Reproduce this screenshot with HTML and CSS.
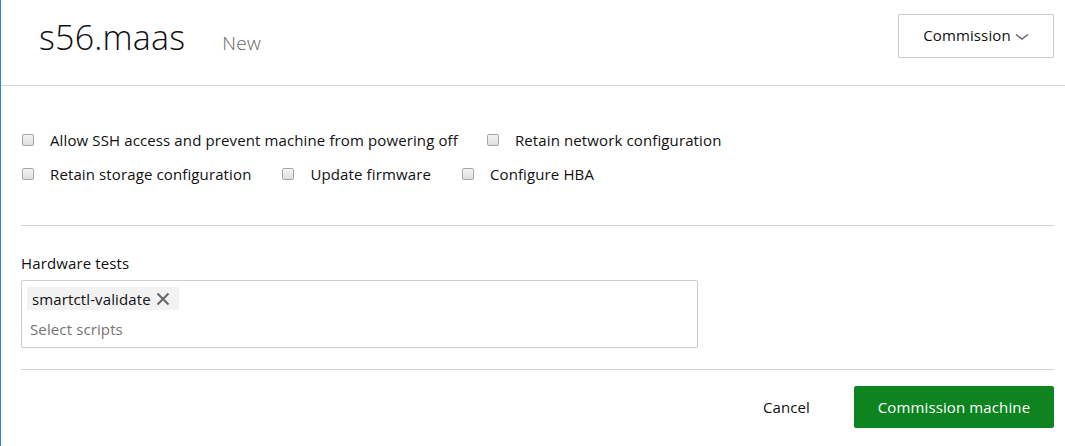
FILE: index.html
```html
<!DOCTYPE html>
<html>
<head>
<meta charset="utf-8">
<link rel="stylesheet" href="styles.css">
</head>
<body>
<div class="page">
  <header class="header">
    <div class="title-group">
      <h1 class="title">s56.maas</h1>
      <span class="status">New</span>
    </div>
    <button class="dropdown-btn">Commission
      <svg class="chev" width="14" height="8" viewBox="0 0 14 8"><path d="M1 1.5 L7 6 L13 1.5" fill="none" stroke="#666" stroke-width="1.4"/></svg>
    </button>
  </header>
  <main class="content">
    <div class="options">
      <div class="opt-row">
        <label class="check"><span class="box"></span>Allow SSH access and prevent machine from powering off</label>
        <label class="check"><span class="box"></span>Retain network configuration</label>
      </div>
      <div class="opt-row">
        <label class="check"><span class="box"></span>Retain storage configuration</label>
        <label class="check"><span class="box"></span>Update firmware</label>
        <label class="check"><span class="box"></span>Configure HBA</label>
      </div>
    </div>
    <hr class="rule">
    <div class="field">
      <div class="field-label">Hardware tests</div>
      <div class="tag-input">
        <span class="chip">smartctl-validate
          <svg class="chip-x" width="14" height="14" viewBox="0 0 14 14"><path d="M1.5 1.5 L12.5 12.5 M12.5 1.5 L1.5 12.5" stroke="#666" stroke-width="2"/></svg>
        </span>
        <div class="placeholder">Select scripts</div>
      </div>
    </div>
    <hr class="rule rule-bottom">
    <div class="actions">
      <button class="btn-link">Cancel</button>
      <button class="btn-primary">Commission machine</button>
    </div>
  </main>
</div>
</body>
</html>
```
FILE: styles.css
```css
* { box-sizing: border-box; }
html, body { margin: 0; padding: 0; background: #fff; }
body {
  font-family: "Open Sans", "Noto Sans", sans-serif;
  color: #111;
  letter-spacing: 0.12px;
}
.page {
  width: 1065px;
  height: 446px;
  border-left: 1px solid #1b8ee0;
  overflow: hidden;
}
.header {
  height: 86px;
  border-bottom: 1px solid #d2d2d2;
  display: flex;
  justify-content: space-between;
  align-items: flex-start;
  padding: 0 11px 0 38px;
}
.title-group {
  display: flex;
  align-items: baseline;
  padding-top: 15px;
}
.title {
  margin: 0;
  font-weight: 300;
  font-size: 34px;
  letter-spacing: 0.2px;
  line-height: 44px;
  color: #111;
}
.status {
  margin-left: 37px;
  font-size: 19px;
  color: #666;
  font-weight: 300;
  letter-spacing: 0.3px;
}
.dropdown-btn {
  margin-top: 14px;
  width: 156px;
  height: 44px;
  background: #fff;
  border: 1px solid #cdcdcd;
  border-radius: 2px;
  font-family: inherit;
  font-size: 15px;
  letter-spacing: 0.12px;
  color: #111;
  display: flex;
  align-items: center;
  justify-content: center;
  gap: 4px;
  padding: 0 0 2px 0;
}
.chev { margin-top: 3px; }
.content {
  padding: 0 11px 0 20px;
}
.options {
  padding-top: 37px;
  padding-bottom: 34px;
}
.opt-row {
  display: flex;
  height: 34px;
  line-height: 20px;
  align-items: center;
}
.check {
  display: flex;
  align-items: center;
  font-size: 15px;
  color: #111;
  margin-right: 28px;
  white-space: nowrap;
}
.opt-row + .opt-row .check { margin-right: 30px; }
.box {
  width: 12px;
  height: 12px;
  border: 1px solid #a6a6a6;
  border-radius: 2px;
  background: linear-gradient(#f4f4f4, #dedede);
  margin-left: 1px;
  margin-right: 16px;
}
.rule {
  margin: 0;
  border: 0;
  border-top: 1px solid #d2d2d2;
}
.field {
  padding-top: 27px;
}
.field-label {
  font-size: 15px;
  color: #111;
  line-height: 20px;
  margin-bottom: 7px;
}
.tag-input {
  width: 677px;
  height: 68px;
  border: 1px solid #cdcdcd;
  border-radius: 2px;
  padding: 6px 5px;
}
.chip {
  display: inline-flex;
  align-items: center;
  gap: 5px;
  background: #f2f2f2;
  height: 23px;
  padding: 0 9px 0 5px;
  font-size: 15px;
  color: #111;
}
.chip-x { margin-top: 1px; }
.placeholder {
  margin-top: 9px;
  margin-left: 3px;
  font-size: 15px;
  color: #757575;
}
.rule-bottom {
  margin-top: 21px;
}
.actions {
  display: flex;
  justify-content: flex-end;
  align-items: center;
  padding-top: 16px;
}
.btn-link {
  background: none;
  border: 0;
  font-family: inherit;
  font-size: 15px;
  letter-spacing: 0.12px;
  color: #111;
  margin-right: 44px;
  padding: 0;
}
.btn-primary {
  width: 200px;
  height: 42px;
  background: #0e8420;
  border: 1px solid #0e8420;
  border-radius: 2px;
  color: #fff;
  font-family: inherit;
  font-size: 15px;
  letter-spacing: 0.12px;
}
```
